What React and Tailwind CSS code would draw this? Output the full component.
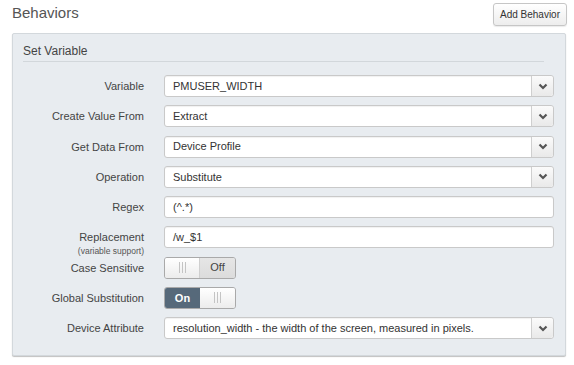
import React from 'react';

const Chevron = () => (
  <svg width="10" height="7" viewBox="0 0 10 7" className="block">
    <polyline points="1.5,1.5 5,5 8.5,1.5" fill="none" stroke="#555" strokeWidth="2.2" />
  </svg>
);

const Grip = () => (
  <span className="flex gap-[2px]">
    <span className="w-px h-[11px] bg-[#c4c4c4]" />
    <span className="w-px h-[11px] bg-[#c4c4c4]" />
    <span className="w-px h-[11px] bg-[#c4c4c4]" />
  </span>
);

const Select = ({ value }) => (
  <div className="flex h-[22px] flex-1 rounded-[3px] border border-[#c9c9c9] bg-white shadow-[inset_0_1px_1px_rgba(0,0,0,0.06)]">
    <div className="flex flex-1 items-center pl-[8px] text-[11px] text-[#333]">{value}</div>
    <div className="flex w-[22px] items-center justify-center rounded-r-[3px] border-l border-[#cfcfcf] bg-gradient-to-b from-[#fbfbfb] to-[#e9e9e9]">
      <Chevron />
    </div>
  </div>
);

const Input = ({ value }) => (
  <div className="flex h-[22px] flex-1 items-center rounded-[3px] border border-[#c9c9c9] bg-white pl-[8px] text-[11px] text-[#333] shadow-[inset_0_1px_1px_rgba(0,0,0,0.06)]">
    {value}
  </div>
);

const Toggle = ({ on }) => (
  <div className="flex h-[22px] w-[72px] overflow-hidden rounded-[3px] border border-[#a9a9a9] text-[11px]">
    {on ? (
      <>
        <div className="flex w-[35px] items-center justify-center bg-[#56697a] font-bold text-white">On</div>
        <div className="flex flex-1 items-center justify-center bg-gradient-to-b from-white to-[#ececec]">
          <Grip />
        </div>
      </>
    ) : (
      <>
        <div className="flex w-[35px] items-center justify-center border-r border-[#cfcfcf] bg-gradient-to-b from-white to-[#ececec]">
          <Grip />
        </div>
        <div className="flex flex-1 items-center justify-center bg-gradient-to-b from-[#e6e6e6] to-[#dcdcdc] text-[#444]">Off</div>
      </>
    )}
  </div>
);

const Row = ({ label, sub, children }) => (
  <div className="flex h-[22px] items-start">
    <div className="flex w-[131px] flex-col items-end text-right text-[11px] text-[#444]">
      <span className="leading-[22px]">{label}</span>
      {sub && <span className="-mt-[2px] text-[8.5px] leading-[10px] text-[#555]">{sub}</span>}
    </div>
    <div className="ml-[20px] flex flex-1">{children}</div>
  </div>
);

export default function App() {
  return (
    <div className="min-h-[365px] bg-white pt-[3px] font-['Liberation_Sans',Arial,sans-serif]">
      <div className="flex items-start justify-between pl-[12px] pr-[7px]">
        <h2 className="pt-[1px] text-[15px] leading-[18px] text-[#555]">Behaviors</h2>
        <button className="h-[23px] w-[74px] rounded-[3px] border border-[#c6c6c6] bg-gradient-to-b from-white to-[#ededed] text-[10px] text-[#333] shadow-[0_1px_1px_rgba(0,0,0,0.08)]">
          Add Behavior
        </button>
      </div>

      <div className="ml-[12px] mr-[8px] mt-[7px] rounded-[2px] border border-[#d3d8dc] bg-[#e8ecf0] pb-[16px] pr-[11px] shadow-[0_1px_1px_rgba(0,0,0,0.25)]">
        <div className="mx-[10px] border-b border-[#d2d7db] pb-[2px] pt-[9px] text-[12px] leading-[16px] text-[#444]">
          Set Variable
        </div>

        <div className="mt-[13px] flex flex-col gap-[8.25px]">
          <Row label="Variable"><Select value="PMUSER_WIDTH" /></Row>
          <Row label="Create Value From"><Select value="Extract" /></Row>
          <Row label="Get Data From"><Select value="Device Profile" /></Row>
          <Row label="Operation"><Select value="Substitute" /></Row>
          <Row label="Regex"><Input value="(^.*)" /></Row>
          <Row label="Replacement" sub="(variable support)"><Input value="/w_$1" /></Row>
          <Row label="Case Sensitive"><Toggle on={false} /></Row>
          <Row label="Global Substitution"><Toggle on /></Row>
          <Row label="Device Attribute">
            <Select value="resolution_width - the width of the screen, measured in pixels." />
          </Row>
        </div>
      </div>
    </div>
  );
}
